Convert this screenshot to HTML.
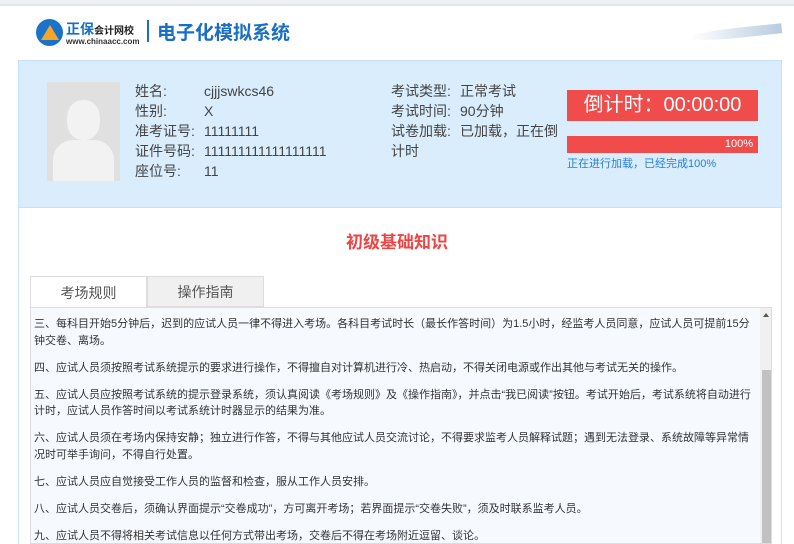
<!DOCTYPE html>
<html><head><meta charset="utf-8"><style>
*{margin:0;padding:0;box-sizing:border-box}
body{width:794px;height:544px;overflow:hidden;background:#fff;font-family:"Liberation Sans","Noto Sans CJK SC",sans-serif;color:#333;position:relative}
.abs{position:absolute}
.info{left:18px;top:60px;width:764px;height:148px;background:#d9edfd;border:1px solid #c6e2fb}
.lab{font-size:14px;color:#444;line-height:20px}
p.r{font-size:11px;line-height:16.5px;margin-bottom:10.5px;color:#333}
</style></head><body>
<div class="abs" style="left:0;top:0;width:794px;height:4px;background:#eef0f2"></div>
<div class="abs" style="left:0;top:4px;width:794px;height:2px;background:#e4e6e8"></div>
<div class="abs" style="left:36px;top:19px;width:27px;height:27px;border-radius:50%;background:#1a73c9"></div>
<div class="abs" style="left:41px;top:25px;width:0;height:0;border-left:9px solid transparent;border-right:9px solid transparent;border-bottom:15px solid #f6a623"></div>
<div class="abs" style="left:66px;top:19px;font-size:14px;font-weight:bold;color:#1a6fc4">正保<span style="font-size:10px;color:#222">会计网校</span></div>
<div class="abs" style="left:66px;top:37px;font-size:8px;font-weight:bold;color:#333">www.chinaacc.com</div>
<div class="abs" style="left:147px;top:20px;width:2px;height:22px;background:#1a6fc4"></div>
<div class="abs" style="left:157px;top:18px;font-size:19px;font-weight:bold;color:#1a6fc4">电子化模拟系统</div>
<div class="abs" style="left:690px;top:28px;width:92px;height:10px;background:linear-gradient(90deg,rgba(255,255,255,0),#b8cce0);border-radius:50% 0 0 50%;transform:rotate(-6deg)"></div>
<div class="abs" style="left:18px;top:60px;width:764px;height:484px;border:1px solid #cfe5f8;border-bottom:none"></div>
<div class="abs info"></div>
<div class="abs" style="left:47px;top:82px;width:73px;height:99px;background:#e0e0e0;overflow:hidden">
<div class="abs" style="left:20px;top:18px;width:33px;height:40px;border-radius:45%;background:#f2f2f2"></div>
<div class="abs" style="left:6px;top:58px;width:61px;height:50px;border-radius:20px 20px 0 0;background:#f2f2f2"></div></div>
<div class="abs lab" style="left:135px;top:81px">姓名:<br>性别:<br>准考证号:<br>证件号码:<br>座位号:</div>
<div class="abs lab" style="left:204px;top:81px">cjjjswkcs46<br>X<br>11111111<br>111111111111111111<br>11</div>
<div class="abs lab" style="left:391px;top:81px">考试类型:<br>考试时间:<br>试卷加载:<br>计时</div>
<div class="abs lab" style="left:460px;top:81px">正常考试<br>90分钟<br>已加载，正在倒</div>
<div class="abs" style="left:567px;top:90px;width:191px;height:31px;background:#f04c4c;color:#fff;font-size:20px;line-height:31px;text-align:center">倒计时：00:00:00</div>
<div class="abs" style="left:567px;top:136px;width:191px;height:17px;background:#f04c4c;color:#fff;font-size:11px;line-height:17px;text-align:right;padding-right:5px">100%</div>
<div class="abs" style="left:567px;top:155px;font-size:11px;color:#2b7dd6">正在进行加载，已经完成100%</div>
<div class="abs" style="left:0;top:228px;width:794px;text-align:center;font-size:17px;font-weight:bold;color:#ef4444">初级基础知识</div>
<div class="abs" style="left:30px;top:276px;width:117px;height:32px;background:#fff;border:1px solid #ddd;border-bottom:none;font-size:14px;line-height:32px;text-align:center;color:#555">考场规则</div>
<div class="abs" style="left:147px;top:276px;width:117px;height:31px;background:#f0f0f0;border:1px solid #ddd;font-size:14px;line-height:31px;text-align:center;color:#555">操作指南</div>
<div class="abs" style="left:30px;top:307px;width:742px;height:237px;background:#f6faff;border:1px solid #ddd;overflow:hidden">
<div style="padding:8px 0 0 3px;width:726px">
<p class="r">三、每科目开始5分钟后，迟到的应试人员一律不得进入考场。各科目考试时长（最长作答时间）为1.5小时，经监考人员同意，应试人员可提前15分钟交卷、离场。</p>
<p class="r">四、应试人员须按照考试系统提示的要求进行操作，不得擅自对计算机进行冷、热启动，不得关闭电源或作出其他与考试无关的操作。</p>
<p class="r">五、应试人员应按照考试系统的提示登录系统，须认真阅读《考场规则》及《操作指南》，并点击“我已阅读”按钮。考试开始后，考试系统将自动进行计时，应试人员作答时间以考试系统计时器显示的结果为准。</p>
<p class="r">六、应试人员须在考场内保持安静；独立进行作答，不得与其他应试人员交流讨论，不得要求监考人员解释试题；遇到无法登录、系统故障等异常情况时可举手询问，不得自行处置。</p>
<p class="r">七、应试人员应自觉接受工作人员的监督和检查，服从工作人员安排。</p>
<p class="r">八、应试人员交卷后，须确认界面提示“交卷成功”，方可离开考场；若界面提示“交卷失败”，须及时联系监考人员。</p>
<p class="r">九、应试人员不得将相关考试信息以任何方式带出考场，交卷后不得在考场附近逗留、谈论。</p>
</div>
<div class="abs" style="left:729px;top:0;width:12px;height:237px;background:#f0f0f0"></div>
<div class="abs" style="left:731px;top:62px;width:9px;height:175px;background:#c1c1c1"></div>
<div class="abs" style="left:732px;top:5px;width:0;height:0;border-left:3.5px solid transparent;border-right:3.5px solid transparent;border-bottom:4px solid #555"></div>
</div>
</body></html>
